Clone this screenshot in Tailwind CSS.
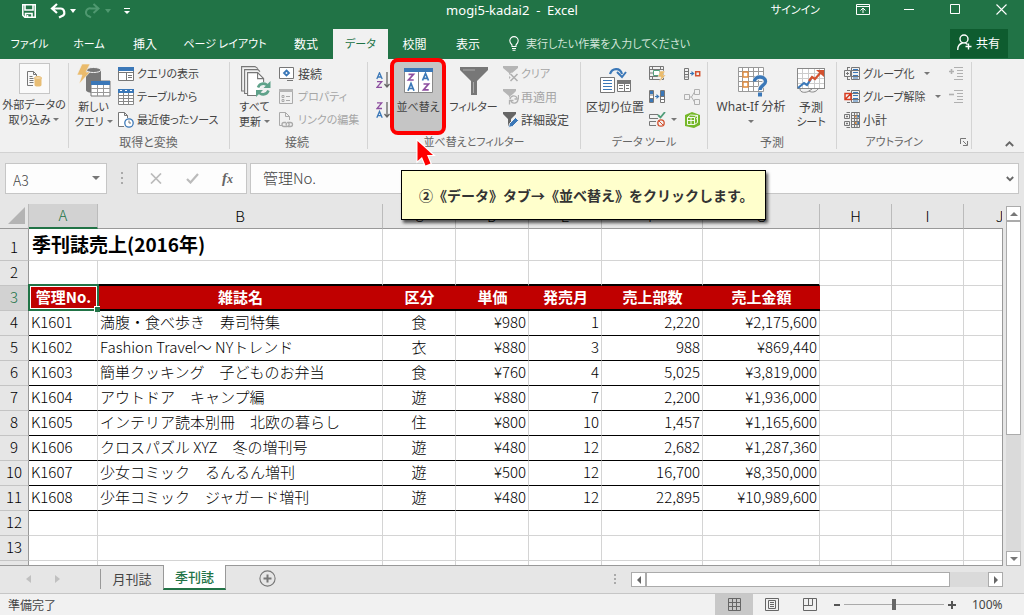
<!DOCTYPE html>
<html lang="ja">
<head>
<meta charset="utf-8">
<meta name="viewport" content="width=device-width, initial-scale=1">
<title>mogi5-kadai2 - Excel</title>
<script src="https://cdn.jsdelivr.net/npm/@tailwindcss/browser@4"></script>
</head>
<body class="relative flex h-screen flex-col overflow-hidden bg-[#e6e6e6] font-['Noto_Sans_CJK_JP',sans-serif] text-[12px] leading-[15px] text-[#444] [font-feature-settings:'palt'] [&_button]:cursor-default [&_svg]:block [&_svg]:shrink-0">

<!-- Title bar -->
<header class="shrink-0 bg-[#217346] text-white">
  <div class="grid h-[29px] grid-cols-[1fr_auto_1fr] items-start">
    <div class="flex h-[22px] items-center pl-[21px]">
      <button aria-label="上書き保存"><svg width="16" height="16" viewBox="0 0 16 16" fill="none" stroke="#fff" stroke-width="1.6"><path d="M1.8 1.8h12.4v12.4H3.8l-2-2z"/><path d="M4 2v5h8V2M4.500 14v-3.500h6.500V14M6.500 14v-2"/></svg></button>
      <button aria-label="元に戻す" class="ml-[13px]"><svg width="17" height="16" viewBox="0 0 17 16" fill="none" stroke="#fff" stroke-width="2.200"><path d="M7 1 2 5.500l5 4.500M2.500 5.500H10a4 4 0 0 1 1.500 7.800L9 14.500"/></svg></button>
      <svg class="ml-[3px]" width="6" height="4"><path d="M0 0h6L3 4z" fill="#fff"/></svg>
      <button aria-label="やり直し" class="ml-[9px]"><svg width="16" height="16" viewBox="0 0 16 16" fill="none" stroke="#4f9870" stroke-width="2"><path d="m8.500 1 5 4.500-5 4.500M13 5.500H6a4 4 0 0 0-2 7.800l2 1.200"/></svg></button>
      <svg class="ml-[4px]" width="6" height="4"><path d="M0 0h6L3 4z" fill="#4f9870"/></svg>
      <svg class="ml-[13px]" width="7" height="7"><path d="M0 0h6v1H0zM0 3h6L3 6z" fill="#fff"/></svg>
    </div>
    <h1 class="flex h-[20px] items-center font-['Noto_Sans','Noto_Sans_CJK_JP',sans-serif] text-[13px] whitespace-pre">mogi5-kadai2  -  Excel</h1>
    <div class="flex h-[19px] items-center justify-end pr-[17px]">
      <a href="#" class="mr-[36px] text-[11px]">サインイン</a>
      <button aria-label="リボンの表示オプション" class="mr-[34px]"><svg width="14" height="11" fill="none" stroke="#fff"><path d="M.5.5h13v10H.5zM.5 2.500h13M7 9V4.500M4.500 6.500 7 4l2.500 2.500"/></svg></button>
      <button aria-label="最小化" class="mr-[36px]"><svg width="10" height="11"><path d="M0 5h10v1H0z" fill="#fff"/></svg></button>
      <button aria-label="最大化" class="mr-[35px]"><svg width="11" height="11" fill="none" stroke="#fff"><path d="M.5.5h9v9h-9z"/></svg></button>
      <button aria-label="閉じる"><svg width="11" height="11" fill="none" stroke="#fff" stroke-width="1.100"><path d="m.5.5 10 10M10.500.5l-10 10"/></svg></button>
    </div>
  </div>
  <!-- Ribbon tabs -->
  <nav class="flex h-[30px] items-stretch [&>button]:pb-[2px]" aria-label="リボン タブ">
    <button class="w-[59px] text-[11px]">ファイル</button>
    <button class="w-[60px] text-[11px]">ホーム</button>
    <button class="w-[52px]">挿入</button>
    <button class="w-[108px] text-[11px]">ページ レイアウト</button>
    <button class="w-[54px]">数式</button>
    <button class="w-[55px] bg-[#f1f1f1] text-[11px] text-[#217346]">データ</button>
    <button class="w-[53px]">校閲</button>
    <button class="w-[54px]">表示</button>
    <label class="ml-[14px] flex flex-1 items-center gap-[7px] pb-[2px]">
      <svg width="10" height="15" viewBox="0 0 10 15" fill="none" stroke="#fff" stroke-width="1.100"><path d="M3 10.500V9C1.500 7.500.8 6.500.8 4.800a4.200 4.200 0 0 1 8.400 0C9.200 6.500 8.500 7.500 7 9v1.500zM3 12.500h4M3.500 14.200h3"/></svg>
      <input aria-label="操作アシスト" placeholder="実行したい作業を入力してください" class="w-[240px] bg-transparent text-[11px] outline-none placeholder:text-[#d3e5da]">
    </label>
    <button class="mr-[16px] mb-px flex w-[58px] items-center gap-[4px] bg-[#0e5c2f] pl-[7px]">
      <svg width="15" height="17" viewBox="0 0 15 17" fill="none" stroke="#fff" stroke-width="1.400"><circle cx="7" cy="5" r="4"/><path d="M.7 16c0-4 2-6.500 5-7M8.500 9l2 1.500M11.500 9.500v6M8.500 12.500h6"/></svg>共有
    </button>
  </nav>
</header>

<!-- Ribbon -->
<section aria-label="データ リボン" class="flex h-[94px] shrink-0 border-b border-[#d2d2d2] bg-[#f1f1f1] pt-[3px] whitespace-nowrap">
  <div class="my-px mb-[4px] w-[69px] border-r border-[#d4d4d4]">
    <button class="flex w-full flex-col items-center text-[11px]">
      <span class="mb-[3px] flex size-[31px] items-center justify-center border border-[#c6c6c6] bg-[#fafafa]">
        <svg width="15" height="16" viewBox="0 0 15 16" fill="none" stroke="#777"><path d="M6 14.500H.5V.5h6l3 3V5M6.500.5v3h3M2.500 5.500h3M2.500 7.500h4M2.500 9.500h4M2.500 11.500h4"/><path d="M7.500 7v7c0 2 7 2 7 0V7z" fill="#e8bd74" stroke="none"/><ellipse cx="11" cy="7" rx="3.500" ry="1.500" fill="#f4d9a8" stroke="#e8bd74"/></svg>
      </span>
      外部データの<span class="flex items-center gap-[3px]">取り込み<svg width="6" height="4"><path d="M0 0h6L3 3z" fill="#777"/></svg></span>
    </button>
  </div>

  <div class="mb-[3px] flex w-[161px] flex-col border-r border-[#d4d4d4]">
    <div class="flex h-[73px]">
      <button class="flex w-[49px] flex-col items-center text-[11px]">
        <span class="flex h-[37px] items-center"><svg width="34" height="34" viewBox="0 0 34 34"><path d="M9 6v20c0 4 15 4 15 0V6z" fill="#777"/><ellipse cx="16.500" cy="6" rx="7.500" ry="2.500" fill="#777" stroke="#f1f1f1"/><path d="M5 0h8L9 8h4L2 20l3-9H0z" fill="#eabb6c" stroke="#f1f1f1" stroke-width=".6"/><path d="M14 17h19v15H14z" fill="#fff" stroke="#777"/><path d="M14 17h19v4H14z" fill="#3b78b8"/><path d="M20.500 21v11M26.500 21v11M14 24.500h19M14 28.500h19" stroke="#999"/></svg></span>
        新しい<span class="flex items-center gap-[3px]">クエリ<svg width="6" height="4"><path d="M0 0h6L3 3z" fill="#777"/></svg></span>
      </button>
      <div class="grid h-[69px] grid-rows-3 text-[11px] [&>button]:flex [&>button]:items-center [&>button]:gap-[3px]">
        <button><svg width="16" height="14" fill="none" stroke="#777"><path d="M.5.5h15v13H.5z" fill="#fff"/><path d="M0 0h16v4H0z" fill="#3b78b8" stroke="none"/><path d="M8.500 6v7M.5 5.500h15M10 8.500h4M10 10.500h4"/></svg>クエリの表示</button>
        <button><svg width="16" height="16" fill="none" stroke="#888"><path d="M.5.5h15v15H.5z" fill="#fff"/><path d="M5.500 3v12M10.500 3v12M.5 6.500h15M.5 9.500h15M.5 12.500h15"/><path d="M0 0h16v4H0z" fill="#3b78b8" stroke="none"/><path d="M2 1.500h2M7 1.500h2M12 1.500h2" stroke="#fff"/></svg>テーブルから</button>
        <button><svg width="16" height="16" fill="none" stroke="#777"><path d="M6 14.500H.5V.5h6l3 3V6M6.500.5v3h3" fill="#fff"/><circle cx="11" cy="11" r="4.200" fill="#fff" stroke="#3b78b8" stroke-width="1.300"/><path d="M11 8.500V11h2"/></svg>最近使ったソース</button>
      </div>
    </div>
    <div class="pr-[1px] text-center text-[#666]">取得と変換</div>
  </div>

  <div class="mb-[3px] flex w-[138px] flex-col border-r border-[#d4d4d4]">
    <div class="flex h-[73px]">
      <button class="flex w-[49px] flex-col items-center text-[11px]">
        <span class="flex h-[37px] items-center pl-[3px]"><svg class="mt-[3px]" width="30" height="32" viewBox="0 0 30 32" fill="none" stroke="#777" stroke-width="1.100"><path d="M3 25H.6V.6H14l3 2M6 27.500H3.600V3.600H17l2 2"/><path d="M15 29.500H6.600V6.600h10l6 6V16" fill="#fff"/><path d="M16.600 6.600v6h6"/><path d="M17 21.500c2-5 8-5 10-1M27.500 24.500c-2 5-8 5-10 1" stroke="#5fa28a" stroke-width="2.600"/><path d="M29.500 15v7h-7zM15 31v-7h7z" fill="#5fa28a" stroke="none"/></svg></span>
        すべて<span class="flex items-center gap-[3px]">更新<svg width="6" height="4"><path d="M0 0h6L3 3z" fill="#777"/></svg></span>
      </button>
      <div class="grid h-[69px] grid-rows-3 text-[11px] [&>button]:flex [&>button]:items-center [&>button]:gap-[4px]">
        <button class="text-[12px]"><svg width="15" height="14" fill="none" stroke="#777"><path d="M.5.5h14v11H.5z" fill="#fff"/><path d="M8 13.500h6M1 11.500h6"/><path d="m7.500 3.500 2.500 2.500-2.500 2.500L5 6z" stroke="#3b78b8" stroke-width="1.800"/></svg>接続</button>
        <button disabled class="text-[#a6a6a6]"><svg width="15" height="16" fill="none" stroke="#aaa"><path d="M.5.5h13v14H.5z"/><path d="M0 0h14v3H0z" fill="#b5b5b5" stroke="none"/><path d="M3 6.500h2v2H3zM3 10.500h2v2H3zM7 7.500h4M7 11.500h4"/></svg>プロパティ</button>
        <button disabled class="text-[#a6a6a6]"><svg width="15" height="16" fill="none" stroke="#aaa"><path d="M3 13.500H.5V.5h6l4 4V8M6.500.5v4h4"/><path d="M7 10.500H5a2 2 0 0 0 0 4h3a2 2 0 0 0 1.500-3.500M9 14.500h2.500a2 2 0 0 0 0-4h-3a2 2 0 0 0-1 3" stroke-width="1.300"/></svg>リンクの編集</button>
      </div>
    </div>
    <div class="pr-[3px] text-center text-[#666]">接続</div>
  </div>

  <div class="mb-[3px] flex w-[213px] flex-col border-r border-[#d4d4d4]">
    <div class="flex h-[73px]">
      <div class="flex w-[24px] flex-col gap-[13px] pt-[10px] pl-[8px]">
        <button aria-label="昇順"><svg width="15" height="17" viewBox="0 0 15 17" fill="none" stroke-width="1.300"><path d="M.8 7 3.500.8 6.200 7M1.600 5h3.800" stroke="#3b78b8"/><path d="M1 9.700h4.700L1 15.300h5" stroke="#8d4fa0"/><path d="M11 0v15M8.500 12l2.500 3 2.500-3" stroke="#666"/></svg></button>
        <button aria-label="降順"><svg width="15" height="17" viewBox="0 0 15 17" fill="none" stroke-width="1.300"><path d="M1 .8h4.700L1 6.500h5" stroke="#8d4fa0"/><path d="m.8 15.700 2.700-6.200 2.700 6.200M1.600 13.700h3.800" stroke="#3b78b8"/><path d="M11 0v15M8.500 12l2.500 3 2.500-3" stroke="#666"/></svg></button>
      </div>
      <button class="relative flex h-[70px] w-[52px] flex-col items-center bg-[#c5c5c5] text-[11px]">
        <span class="flex h-[37px] items-center"><svg width="29" height="25" viewBox="0 0 29 25" fill="none" stroke-width="1.700"><path d="M.5.5h28v24H.5z" fill="#fff" stroke="#888" stroke-width="1"/><path d="M0 0h29v4H0z" fill="#3b78b8"/><path d="M14.500 4v21" stroke="#888" stroke-width="1"/><path d="M4.500 6.300h5L4.500 12h5.200M19.500 16h5l-5 5.900h5.200" stroke="#8d4fa0"/><path d="m4 22.700 3-7.300 3 7.300M5 20.500h4M18.500 12.500l3-7 3 7M19.500 10.300h4" stroke="#3b78b8"/></svg></span>
        並べ替え
        <span class="pointer-events-none absolute -inset-x-[2px] -top-[4px] -bottom-[3px] rounded-[8px] border-4 border-[#fe0000]"></span>
      </button>
      <button class="flex w-[59px] flex-col items-center text-[11px]">
        <span class="flex h-[37px] items-center"><svg width="28" height="28" viewBox="0 0 28 28"><path d="M0 0h28v3L17 14v14h-6V14L0 3z" fill="#777"/><path d="M3 3h12M13.500 15v11" stroke="#aaa" fill="none"/></svg></span>
        フィルター
      </button>
      <div class="grid h-[69px] grid-rows-3 [&>button]:flex [&>button]:items-center [&>button]:gap-[2px]">
        <button disabled class="text-[11px] text-[#a6a6a6]"><svg width="16" height="16"><path d="M0 0h15v2L9 7v6H6V7L0 2z" fill="#b5b5b5"/><path d="m7 8 7 7M14 8l-7 7" stroke="#f1f1f1" stroke-width="4"/><path d="m7.500 8 7 7M14.500 8l-7 7" stroke="#b0b0b0" stroke-width="1.600"/></svg>クリア</button>
        <button disabled class="text-[#a6a6a6]"><svg width="16" height="16" fill="none"><path d="M0 0h13v2L8 7v6H6V7L0 2z" fill="#b5b5b5"/><circle cx="11" cy="10.500" r="5" fill="#f1f1f1"/><path d="M7 10c1-4 6-4 7-1M15 11c-1 4-6 4-7 1M15.500 6v4h-4M6.500 15.500v-4h4" stroke="#b0b0b0" stroke-width="1.300"/></svg>再適用</button>
        <button><svg width="16" height="16"><path d="M0 0h13v2L8 7v7H5V7L0 2z" fill="#666"/><path d="m5.500 15.500 1-4 6-6 3 3-6 6z" fill="#3b78b8" stroke="#f1f1f1"/></svg>詳細設定</button>
      </div>
    </div>
    <div class="text-center text-[11px] text-[#666]">並べ替えとフィルター</div>
  </div>

  <div class="mb-[3px] flex w-[127px] flex-col border-r border-[#d4d4d4]">
    <div class="flex h-[73px]">
      <button class="flex w-[68px] flex-col items-center">
        <span class="flex h-[37px] items-center"><svg width="31" height="27" viewBox="0 0 31 27" fill="none" stroke="#777"><path d="M.5 10.500h14v15H.5z" fill="#fff"/><path d="M3 13.500h9M3 16.500h9M3 19.500h9M3 22.500h9" stroke="#3b78b8"/><path d="M17.500 13.500h13v11h-13z" fill="#fff"/><path d="M17 13h14v4H17z" fill="#777" stroke="none"/><path d="M24.500 17v7M19 18.500h4M19 21.500h4M26 18.500h3M26 21.500h3"/><path d="M10 7C12 1 20 0 22 7" stroke="#3b78b8" stroke-width="2.200"/><path d="m17 5 5 5 4-5" stroke="#3b78b8" stroke-width="2"/></svg></span>
        区切り位置
      </button>
      <div class="grid h-[69px] grid-cols-[35px_20px] grid-rows-3 items-center">
        <button aria-label="フラッシュ フィル"><svg width="17" height="16" fill="none" stroke="#777"><path d="M.5.5h14v13H.5zM.5 3.500h14M.5 10.500h14M3.500.5v3M3.500 10.500v3M11.500.5v3M.5 7h4"/><path d="M4.500 4.500h6v5h-6z" stroke="#55a07c" fill="#fff"/><path d="M11 5h5l-2 4h3l-7 7 2-5H9z" fill="#eabb6c" stroke="#f1f1f1" stroke-width=".5"/></svg></button>
        <button aria-label="統合"><svg width="17" height="12" fill="none" stroke="#777"><path d="M.5.5h4v11h-4zM.5 3.500h4M.5 6.500h4M.5 9h4"/><path d="M6 5.500h3" stroke="#3b78b8"/><path d="m7.500 3 3 2.500-3 2.500z" fill="#3b78b8" stroke="none"/><path d="M11.700 3.700h4v4h-4z" stroke="#d35230" stroke-width="1.500"/></svg></button>
        <button aria-label="重複の削除"><svg width="17" height="14" fill="none" stroke="#777"><path d="M.5.5h4v12h-4zM11.500.5h4v12h-4z" fill="#fff"/><path d="M1 1h3v3H1zM1 9h3v3H1zM12 1h3v5h-3z" fill="#3b78b8" stroke="none"/><path d="M.5 5h4M.5 8.500h4M11.500 6.500h4M11.500 9.500h4"/><path d="M6 6.500h3" stroke="#3b78b8"/><path d="m7.500 4 3 2.500-3 2.500z" fill="#3b78b8" stroke="none"/></svg></button>
        <button disabled aria-label="リレーションシップ"><svg width="17" height="16" fill="none" stroke="#b0b0b0"><path d="M.5 5.500h5v5h-5zM10.500.5h5v5h-5zM10.500 10.500h5v5h-5zM5.500 8h2l3-5M7.500 8l3 5"/></svg></button>
        <button aria-label="データの入力規則" class="flex items-center gap-[5px]"><svg width="17" height="15" fill="none" stroke="#777"><path d="M9 2.500H.5v4H9M7 9.500H.5v4H7"/><path d="m9 3 2.500 2.500L16 0" stroke="#4f9c78" stroke-width="1.800"/><circle cx="12" cy="11" r="3.200" stroke="#d35230" stroke-width="1.300"/><path d="m10 9 4 4" stroke="#d35230"/></svg><svg width="6" height="4"><path d="M0 0h6L3 3z" fill="#777"/></svg></button>
        <button aria-label="データ モデルの管理"><svg width="17" height="16" fill="none"><path d="m1 3 7-3 8 3v10l-6 3-9-2z" fill="#76b82a"/><path d="M3.500 5.500h7v7h-7zM3.500 8.500h7M7 5.500v7M10.500 5.500l3-2v7l-3 2M3.500 5.500l3-2.500 7 .5M12 7l1-.5" stroke="#fff" stroke-width=".9"/></svg></button>
      </div>
    </div>
    <div class="text-center text-[11px] text-[#666]">データ ツール</div>
  </div>

  <div class="mb-[3px] flex w-[129px] flex-col border-r border-[#d4d4d4]">
    <div class="flex h-[73px]">
      <button class="flex w-[86px] flex-col items-center">
        <span class="flex h-[37px] items-center pl-[3px]"><svg class="mt-[3px]" width="30" height="30" viewBox="0 0 30 30" fill="none" stroke="#999"><path d="M.5.5h25v24H.5z" fill="#fff"/><path d="M.5 4.500h25M.5 9.500h25M.5 14.500h25M.5 19.500h25M4.500.5v24M10.500.5v24M15.500.5v24M20.500.5v24"/><path d="M5 5h5v5H5zM5 15h5v5H5z" fill="#fff" stroke="#e08a3c" stroke-width="1.400"/><path d="M17 14c0-5 10-5 10 0 0 4-5 4-5 9" stroke="#f1f1f1" stroke-width="5"/><path d="M16.500 14.500c0-6 11-6 11 0 0 4-5.500 4-5.500 8.500" stroke="#3b78b8" stroke-width="3.400"/><path d="M20 25.500h4v4h-4z" fill="#3b78b8" stroke="none"/></svg></span>
        <span class="font-['Noto_Sans','Noto_Sans_CJK_JP',sans-serif] text-[12px]">What-If 分析</span>
        <svg class="mt-[6px]" width="6" height="4"><path d="M0 0h6L3 3z" fill="#777"/></svg>
      </button>
      <button class="flex w-[34px] flex-col items-center">
        <span class="flex h-[37px] items-center"><svg width="29" height="26" viewBox="0 0 29 26" fill="none" stroke="#888"><path d="M.5.5h27v20H.5z" fill="#fff"/><path d="M.5 5.500h27M.5 10.500h27M.5 15.500h27M5.500.5v20M11.500.5v20M17.500.5v20M22.500.5v20" stroke="#ccc"/><path d="M.5 20.500h27v-20H.5zM3 21c0 4 6 4 9 2l3-2M12 23c3 2 7 1 9-2"/><path d="m1 20 6-5 3 2 4-6" stroke="#3b78b8" stroke-width="2.200"/><path d="m12 13 3-4 3 2 7-8" stroke="#d35230" stroke-width="2.200"/><path d="M19 2h8v7z" fill="#d35230" stroke="none"/></svg></span>
        予測<span class="text-[11px]">シート</span>
      </button>
    </div>
    <div class="text-center text-[#666]">予測</div>
  </div>

  <div class="mb-[3px] flex w-[135px] flex-col border-r border-[#d4d4d4] pl-[7px]">
    <div class="flex h-[73px] justify-between pr-[7px]">
      <div class="grid h-[69px] grid-rows-3 text-[11px] [&>button]:flex [&>button]:items-center [&>button]:gap-[3px]">
        <button><svg width="16" height="14" fill="none" stroke="#777"><path d="M3 .5h3M3 12.500h3M3.500 0v3M3.500 10v3M.5 3.500h6v6h-6zM2 6.500h3M3.500 5v3M7.500.5h8v12h-8zM7.500 3.500h8M7.500 9.500h8" /><path d="M9 2.500h5M9 5.500h5M9 8.500h5M9 11h5" stroke="#3b78b8"/></svg>グループ化<svg class="ml-[6px]" width="6" height="4"><path d="M0 0h6L3 3z" fill="#777"/></svg></button>
        <button><svg width="16" height="14" fill="none" stroke="#777"><path d="M3 .5h3M3 12.500h3M7.500.5h8v12h-8zM7.500 3.500h8M7.500 9.500h8"/><path d="M9 2.500h5M9 5.500h5M9 8.500h5M9 11h5" stroke="#3b78b8"/><path d="M1 3.500h6v6H1zM1 9.500l6-6" stroke="#d83b1f" stroke-width="1.500"/></svg>グループ解除<svg class="ml-[6px]" width="6" height="4"><path d="M0 0h6L3 3z" fill="#777"/></svg></button>
        <button class="text-[12px]"><svg width="16" height="16" fill="none" stroke="#777"><path d="M2.500.5H6M.5 2.500h5v4h-5zM2 4.500h2M3 3.500v2M.5 9.500h5v4h-5zM2 11.500h2M3 10.500v2M2.500 15.500H6M7.500.5h8v15h-8zM10.500.5v15M13 .5v15M7.500 3.500h8M7.500 6.500h8M7.500 9.500h8M7.500 12.500h8"/><path d="M11 4.500h1.500M11 11h1.500" stroke="#e08a3c" stroke-width="2"/><path d="M13.500 4.500H15M13.500 11H15" stroke="#3b78b8" stroke-width="2"/></svg>小計</button>
      </div>
      <div class="grid h-[69px] grid-rows-3 items-center">
        <button disabled aria-label="詳細データの表示"><svg width="15" height="14" fill="none" stroke="#b0b0b0"><path d="M5 .5h9M8 3.500h6M8 6.500h6M8 9.500h6M5 12.500h9"/><path d="M0 4.500h5M2.500 2v5" stroke-width="1.600"/></svg></button>
        <button disabled aria-label="詳細を表示しない"><svg width="15" height="14" fill="none" stroke="#b0b0b0"><path d="M5 .5h9M8 3.500h6M8 6.500h6M8 9.500h6M5 12.500h9"/><path d="M0 4.500h5" stroke-width="1.600"/></svg></button>
      </div>
    </div>
    <div class="flex items-center justify-end text-[11px] text-[#666]">アウトライン<button aria-label="アウトラインの設定" class="mr-[3px] ml-[37px]"><svg width="8" height="8" fill="none" stroke="#777"><path d="M.5 6V.5H6M3 3l3.500 3.500M7.500 3v4.500H3"/></svg></button></div>
  </div>
  <div class="flex flex-1 items-end justify-end pr-[10px] pb-[5px]">
    <button aria-label="リボンを折りたたむ"><svg width="9" height="6" fill="none" stroke="#666" stroke-width="1.800"><path d="m.8 5 3.700-3.700L8.200 5"/></svg></button>
  </div>
</section>

<!-- Formula bar -->
<div class="flex h-[51px] shrink-0 items-start px-[5px] pt-[10px]">
  <div class="flex h-[31px] w-[102px] items-center border border-[#c6c6c6] bg-[#fdfdfd] pr-[6px]">
    <input aria-label="名前ボックス" value="A3" class="min-w-0 flex-1 bg-transparent pt-[3px] pl-[7px] text-[14px] font-light outline-none">
    <svg width="8" height="5"><path d="M0 0h8L4 4z" fill="#777"/></svg>
  </div>
  <svg class="mt-[9px] ml-[14px]" width="2" height="12"><path d="M0 0h2v2H0zM0 5h2v2H0zM0 10h2v2H0z" fill="#aaa"/></svg>
  <div class="ml-[14px] flex h-[31px] w-[110px] items-center border border-[#c6c6c6] bg-[#fdfdfd]">
    <button aria-label="キャンセル" class="ml-[12px]"><svg width="12" height="11" fill="none" stroke="#bbb" stroke-width="1.700"><path d="m1 .5 10 10M11 .5l-10 10"/></svg></button>
    <button aria-label="入力" class="ml-[24px]"><svg width="13" height="11" fill="none" stroke="#bbb" stroke-width="2.200"><path d="m1 6 3.500 3.500L12 1"/></svg></button>
    <button aria-label="関数の挿入" class="ml-[23px] font-['Liberation_Serif',serif] text-[15px] font-bold text-[#666] italic">f<span class="text-[12px]">x</span></button>
  </div>
  <div class="ml-[3px] flex h-[31px] flex-1 items-center border border-[#c6c6c6] bg-[#fdfdfd] pr-[4px]">
    <input aria-label="数式バー" value="管理No." class="min-w-0 flex-1 bg-transparent pb-[2px] pl-[12px] text-[15px] font-light outline-none">
    <svg width="8" height="6" fill="none" stroke="#666" stroke-width="1.800"><path d="m.8 1 3.200 3.200L7.200 1"/></svg>
  </div>
</div>

<!-- Worksheet -->
<main class="flex min-h-0 flex-1">
  <div class="min-w-0 flex-1 overflow-hidden border-b border-[#999]">
    <table class="w-[1036px] table-fixed border-separate border-spacing-0 text-[15px] leading-[20px] font-light text-black [font-feature-settings:normal] [&_tbody_td]:border-r [&_tbody_td]:border-b [&_tbody_td]:border-[#d4d4d4] [&_tbody_td]:bg-white [&_tbody_td]:px-[2px] [&_tbody_td]:pt-0 [&_tbody_td]:pb-[2px] [&_tbody_td]:whitespace-nowrap [&_tbody_th]:h-[25px] [&_tbody_th]:px-0 [&_tbody_th]:pt-0 [&_tbody_th]:pb-[2px]">
      <colgroup><col class="w-[29px]"><col class="w-[69px]"><col class="w-[285px]"><col class="w-[73px]"><col class="w-[73px]"><col class="w-[73px]"><col class="w-[101px]"><col class="w-[117px]"><col class="w-[72px]"><col class="w-[72px]"><col class="w-[72px]"></colgroup>
      <thead class="[&_th]:h-[25px] [&_th]:border-r [&_th]:border-b [&_th]:border-r-[#bbb] [&_th]:border-b-[#999] [&_th]:px-0 [&_th]:pt-0 [&_th]:pb-px [&_th]:text-[15px] [&_th]:font-light">
        <tr><th aria-label="すべて選択"><svg class="ml-auto mr-[3px]" width="17" height="17"><path d="M17 0v17H0z" fill="#b4b4b4"/></svg></th><th scope="col" class="border-b-2! border-b-[#217346]! bg-[#d2d2d2] text-[#217346]">A</th><th scope="col">B</th><th scope="col">C</th><th scope="col">D</th><th scope="col">E</th><th scope="col">F</th><th scope="col">G</th><th scope="col">H</th><th scope="col">I</th><th scope="col">J</th></tr>
      </thead>
      <tbody class="[&_th[scope=row]]:border-r [&_th[scope=row]]:border-b [&_th[scope=row]]:border-r-[#999] [&_th[scope=row]]:border-b-[#c4c4c4] [&_th[scope=row]]:font-light">
        <tr><th scope="row" class="h-[32px]! pt-[6px]!">1</th><td colspan="2" class="overflow-visible pl-[3px]! text-[19px] font-bold">季刊誌売上(2016年)</td><td></td><td></td><td></td><td></td><td></td><td></td><td></td><td></td></tr>
        <tr class="[&>td:nth-child(-n+8)]:border-b-2 [&>td:nth-child(-n+8)]:border-b-black"><th scope="row">2</th><td></td><td></td><td></td><td></td><td></td><td></td><td></td><td></td><td></td><td></td></tr>
        <tr class="[&>td:nth-child(-n+8)]:border-r-0 [&>td:nth-child(-n+8)]:border-b-2 [&>td:nth-child(-n+8)]:border-b-black [&>td:nth-child(-n+8)]:bg-[#c00000] [&>td:nth-child(-n+8)]:text-center [&>td:nth-child(-n+8)]:font-bold [&>td:nth-child(-n+8)]:text-white"><th scope="row" class="bg-[#d2d2d2] text-[#217346]">3</th>
          <td class="relative">管理No.<span class="pointer-events-none absolute -top-[2px] right-[-1px] bottom-[-2px] left-[-1px] border-2 border-[#217346] inset-ring inset-ring-white"></span><span class="absolute right-[-2px] bottom-[-3px] size-[6px] border-t border-l border-white bg-[#217346]"></span></td><td>雑誌名</td><td>区分</td><td>単価</td><td>発売月</td><td>売上部数</td><td>売上金額</td><td></td><td></td><td></td></tr>
      </tbody>
      <tbody class="[&_td:nth-child(-n+8)]:border-b-black! [&_td:nth-child(4)]:text-center [&_td:nth-child(n+5)]:text-right [&_th]:border-r [&_th]:border-b [&_th]:border-r-[#999] [&_th]:border-b-[#c4c4c4] [&_th]:font-light">
        <tr><th scope="row">4</th><td>K1601</td><td>満腹・食べ歩き　寿司特集</td><td>食</td><td>¥980</td><td>1</td><td>2,220</td><td>¥2,175,600</td><td></td><td></td><td></td></tr>
        <tr><th scope="row">5</th><td>K1602</td><td>Fashion Travel～ NYトレンド</td><td>衣</td><td>¥880</td><td>3</td><td>988</td><td>¥869,440</td><td></td><td></td><td></td></tr>
        <tr><th scope="row">6</th><td>K1603</td><td>簡単クッキング　子どものお弁当</td><td>食</td><td>¥760</td><td>4</td><td>5,025</td><td>¥3,819,000</td><td></td><td></td><td></td></tr>
        <tr><th scope="row">7</th><td>K1604</td><td>アウトドア　キャンプ編</td><td>遊</td><td>¥880</td><td>7</td><td>2,200</td><td>¥1,936,000</td><td></td><td></td><td></td></tr>
        <tr><th scope="row">8</th><td>K1605</td><td>インテリア読本別冊　北欧の暮らし</td><td>住</td><td>¥800</td><td>10</td><td>1,457</td><td>¥1,165,600</td><td></td><td></td><td></td></tr>
        <tr><th scope="row">9</th><td>K1606</td><td>クロスパズル XYZ　冬の増刊号</td><td>遊</td><td>¥480</td><td>12</td><td>2,682</td><td>¥1,287,360</td><td></td><td></td><td></td></tr>
        <tr><th scope="row">10</th><td>K1607</td><td>少女コミック　るんるん増刊</td><td>遊</td><td>¥500</td><td>12</td><td>16,700</td><td>¥8,350,000</td><td></td><td></td><td></td></tr>
        <tr><th scope="row">11</th><td>K1608</td><td>少年コミック　ジャガード増刊</td><td>遊</td><td>¥480</td><td>12</td><td>22,895</td><td>¥10,989,600</td><td></td><td></td><td></td></tr>
      </tbody>
      <tbody class="[&_th]:border-r [&_th]:border-b [&_th]:border-r-[#999] [&_th]:border-b-[#c4c4c4] [&_th]:font-light">
        <tr><th scope="row">12</th><td></td><td></td><td></td><td></td><td></td><td></td><td></td><td></td><td></td><td></td></tr>
        <tr><th scope="row">13</th><td></td><td></td><td></td><td></td><td></td><td></td><td></td><td></td><td></td><td></td></tr>
        <tr><th scope="row" aria-label="14"></th><td></td><td></td><td></td><td></td><td></td><td></td><td></td><td></td><td></td><td></td></tr>
      </tbody>
    </table>
  </div>
  <div class="mt-[24px] w-px bg-[#999]"></div>
  <!-- Vertical scroll bar -->
  <div class="mt-[2px] mr-[3px] ml-[3px] flex w-[15px] flex-col bg-[#dadada]">
    <button aria-label="上へスクロール" class="flex h-[15px] items-center justify-center border border-[#ababab] bg-white"><svg width="8" height="4"><path d="M0 4h8L4 0z" fill="#777"/></svg></button>
    <div class="h-[214px] border border-[#ababab] bg-white"></div>
    <button aria-label="下へスクロール" class="mt-auto flex h-[15px] items-center justify-center border border-[#ababab] bg-white"><svg width="8" height="4"><path d="M0 0h8L4 4z" fill="#777"/></svg></button>
  </div>
</main>

<!-- Sheet tabs -->
<div class="flex h-[27px] shrink-0 items-start pr-[21px] text-[13px]">
  <button disabled aria-label="前のシート" class="mt-[9px] ml-[26px]"><svg width="5" height="8"><path d="M5 0v8L0 4z" fill="#c0c0c0"/></svg></button>
  <button disabled aria-label="次のシート" class="mt-[9px] ml-[24px]"><svg width="5" height="8"><path d="M0 0v8l5-4z" fill="#c0c0c0"/></svg></button>
  <div class="mt-[3px] ml-[40px] h-[20px] w-px bg-[#999]"></div>
  <button class="h-[24px] w-[62px]">月刊誌</button>
  <button class="-mt-px h-[25px] w-[63px] border-x border-b-2 border-x-[#999] border-b-[#217346] bg-white font-medium text-[#217346]">季刊誌</button>
  <button aria-label="新しいシート" class="mt-[4px] ml-[33px]"><svg width="17" height="17" fill="none" stroke="#777"><circle cx="8.500" cy="8.500" r="7.600" stroke-width="1.100"/><path d="M4.500 8.500h8M8.500 4.500v8" stroke-width="2"/></svg></button>
  <div class="flex flex-1 items-start justify-end">
    <svg class="mt-[8px] mr-[15px]" width="2" height="12"><path d="M0 0h2v2H0zM0 4h2v2H0zM0 8h2v2H0z" fill="#aaa"/></svg>
    <div class="mt-[6px] flex h-[15px] w-[372px] bg-[#dadada]">
      <button aria-label="左へスクロール" class="flex w-[15px] items-center justify-center border border-[#ababab] bg-white"><svg width="4" height="8"><path d="M4 0v8L0 4z" fill="#666"/></svg></button>
      <div class="w-[304px] border border-[#ababab] bg-white"></div>
      <button aria-label="右へスクロール" class="ml-auto flex w-[15px] items-center justify-center border border-[#ababab] bg-white"><svg width="4" height="8"><path d="M0 0v8l4-4z" fill="#666"/></svg></button>
    </div>
  </div>
</div>

<!-- Status bar -->
<footer class="flex h-[22px] shrink-0 items-center border-t border-[#c6c6c6] bg-[#f1f1f1] pl-[8px]">
  <span class="flex-1">準備完了</span>
  <button aria-label="標準" class="flex h-full w-[38px] items-center justify-center bg-[#c8c8c8]"><svg width="13" height="13" fill="none" stroke="#666"><path d="M.5.5h12v12H.5zM.5 4.500h12M.5 8.500h12M4.500.5v12M8.500.5v12"/></svg></button>
  <button aria-label="ページ レイアウト" class="flex h-full w-[38px] items-center justify-center"><svg width="14" height="13" fill="none" stroke="#666"><path d="M.5.5h13v12H.5zM3.500 2.500h7v8h-7zM5 4.500h4M5 6.500h4M5 8.500h4"/></svg></button>
  <button aria-label="改ページ プレビュー" class="flex h-full w-[38px] items-center justify-center"><svg width="14" height="13" fill="none" stroke="#666"><path d="M.5.5h13v12H.5zM5.500.5v7M9.500.5v7M.5 7.500h9"/></svg></button>
  <button aria-label="縮小" class="ml-[5px]"><svg width="6" height="8"><path d="M0 3h6v2H0z" fill="#555"/></svg></button>
  <input type="range" aria-label="ズーム" min="0" max="100" value="50" class="mx-[4px] h-[12px] w-[100px] appearance-none bg-transparent bg-[linear-gradient(#aaa,#aaa)] bg-[length:100%_1px] bg-center bg-no-repeat [&::-webkit-slider-thumb]:h-[11px] [&::-webkit-slider-thumb]:w-[4px] [&::-webkit-slider-thumb]:appearance-none [&::-webkit-slider-thumb]:bg-[#666]">
  <button aria-label="拡大"><svg width="8" height="8"><path d="M0 3h8v2H0zM3 0h2v8H3z" fill="#555"/></svg></button>
  <span class="w-[68px] pl-[16px] font-['Noto_Sans',sans-serif] text-[12px]">100%</span>
</footer>

<!-- Instruction callout and pointer -->
<svg class="absolute top-[137px] left-[414px]" width="22" height="32" viewBox="0 0 22 32"><path d="M3.500 4v20l4.500-4 3.500 8.500 5-2L13 18h6z" fill="#fe0000" stroke="#fff" stroke-width="2.200" paint-order="stroke"/></svg>
<div role="tooltip" class="absolute top-[170px] left-[401px] border border-black bg-[#ffffcc] py-[14px] pr-[11px] pl-[17px] text-[14px] leading-[20px] font-bold whitespace-nowrap text-[#333] shadow-[2px_3px_3px_rgba(0,0,0,0.65)] [font-feature-settings:normal]">②《データ》タブ→《並べ替え》をクリックします。</div>
</body>
</html>
